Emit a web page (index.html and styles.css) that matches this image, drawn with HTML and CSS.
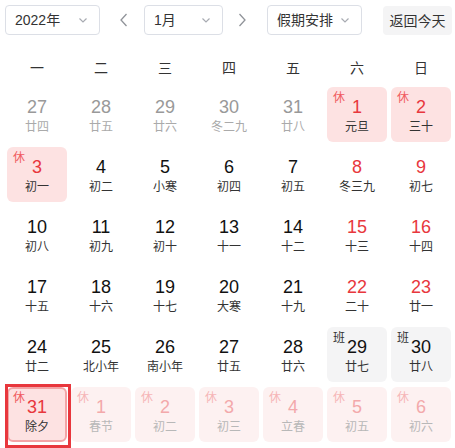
FILE: index.html
```html
<!DOCTYPE html>
<html lang="zh-CN">
<head>
<meta charset="utf-8">
<link rel="stylesheet" href="styles.css">
</head>
<body>
<div class="cal">
  <div class="toolbar">
    <div class="select year"><span>2022年</span><svg class="chev" viewBox="0 0 12 12"><path d="M2.5 4.5 L6 8 L9.5 4.5"/></svg></div>
    <button class="arrow prev"><svg viewBox="0 0 10 16"><path d="M7.5 2 L2 8 L7.5 14"/></svg></button>
    <div class="select month"><span>1月</span><svg class="chev" viewBox="0 0 12 12"><path d="M2.5 4.5 L6 8 L9.5 4.5"/></svg></div>
    <button class="arrow next-btn"><svg viewBox="0 0 10 16"><path d="M2.5 2 L8 8 L2.5 14"/></svg></button>
    <div class="select holiday"><span>假期安排</span><svg class="chev" viewBox="0 0 12 12"><path d="M2.5 4.5 L6 8 L9.5 4.5"/></svg></div>
    <button class="today">返回今天</button>
  </div>
  <div class="week">
    <div>一</div><div>二</div><div>三</div><div>四</div><div>五</div><div>六</div><div>日</div>
  </div>
  <div class="grid">
    <div class="day other"><b>27</b><i>廿四</i></div>
    <div class="day other"><b>28</b><i>廿五</i></div>
    <div class="day other"><b>29</b><i>廿六</i></div>
    <div class="day other"><b>30</b><i>冬二九</i></div>
    <div class="day other"><b>31</b><i>廿八</i></div>
    <div class="day rest"><em>休</em><b>1</b><i>元旦</i></div>
    <div class="day rest"><em>休</em><b>2</b><i>三十</i></div>

    <div class="day rest"><em>休</em><b>3</b><i>初一</i></div>
    <div class="day"><b>4</b><i>初二</i></div>
    <div class="day"><b>5</b><i>小寒</i></div>
    <div class="day"><b>6</b><i>初四</i></div>
    <div class="day"><b>7</b><i>初五</i></div>
    <div class="day weekend"><b>8</b><i>冬三九</i></div>
    <div class="day weekend"><b>9</b><i>初七</i></div>

    <div class="day"><b>10</b><i>初八</i></div>
    <div class="day"><b>11</b><i>初九</i></div>
    <div class="day"><b>12</b><i>初十</i></div>
    <div class="day"><b>13</b><i>十一</i></div>
    <div class="day"><b>14</b><i>十二</i></div>
    <div class="day weekend"><b>15</b><i>十三</i></div>
    <div class="day weekend"><b>16</b><i>十四</i></div>

    <div class="day"><b>17</b><i>十五</i></div>
    <div class="day"><b>18</b><i>十六</i></div>
    <div class="day"><b>19</b><i>十七</i></div>
    <div class="day"><b>20</b><i>大寒</i></div>
    <div class="day"><b>21</b><i>十九</i></div>
    <div class="day weekend"><b>22</b><i>二十</i></div>
    <div class="day weekend"><b>23</b><i>廿一</i></div>

    <div class="day"><b>24</b><i>廿二</i></div>
    <div class="day"><b>25</b><i>北小年</i></div>
    <div class="day"><b>26</b><i>南小年</i></div>
    <div class="day"><b>27</b><i>廿五</i></div>
    <div class="day"><b>28</b><i>廿六</i></div>
    <div class="day work"><em>班</em><b>29</b><i>廿七</i></div>
    <div class="day work"><em>班</em><b>30</b><i>廿八</i></div>

    <div class="day rest selected"><em>休</em><b>31</b><i>除夕</i></div>
    <div class="day rest next"><em>休</em><b>1</b><i>春节</i></div>
    <div class="day rest next"><em>休</em><b>2</b><i>初二</i></div>
    <div class="day rest next"><em>休</em><b>3</b><i>初三</i></div>
    <div class="day rest next"><em>休</em><b>4</b><i>立春</i></div>
    <div class="day rest next"><em>休</em><b>5</b><i>初五</i></div>
    <div class="day rest next"><em>休</em><b>6</b><i>初六</i></div>
  </div>
</div>
</body>
</html>
```
FILE: styles.css
```css
* { box-sizing: border-box; }
html, body { margin: 0; padding: 0; background: #fff; }
body {
  font-family: "Liberation Sans", "Noto Sans CJK SC", sans-serif;
  color: #333;
  width: 455px;
  height: 448px;
  overflow: hidden;
}
.cal { padding: 5px 0 0 7px; }
.toolbar {
  display: flex;
  align-items: center;
  height: 30px;
  margin-left: -2px;
}
.select {
  height: 30px;
  border: 1px solid #dcdfe6;
  border-radius: 4px;
  display: flex;
  align-items: center;
  justify-content: space-between;
  padding: 0 10px 0 9px;
  font-size: 14px;
  color: #333;
  background: #fff;
}
.select span { line-height: 1; }
.chev { width: 12px; height: 12px; fill: none; stroke: #a8abb2; stroke-width: 1.2; }
.year { width: 95px; }
.month { width: 79px; }
.holiday { width: 95px; }
.arrow {
  border: 0;
  background: none;
  padding: 0;
  width: 44px;
  height: 30px;
  display: flex;
  align-items: center;
  justify-content: center;
}
.arrow.prev { padding-left: 4px; }
.arrow.next-btn { padding-right: 6px; }
.arrow svg { width: 10px; height: 16px; fill: none; stroke: #909399; stroke-width: 1.3; }
.today {
  margin-left: 21px;
  height: 29px;
  width: 69px;
  border: 0;
  border-radius: 4px;
  background: #f4f4f5;
  font-family: "Noto Sans CJK SC", sans-serif;
  font-size: 14px;
  color: #333;
  padding: 0;
}
.week {
  display: grid;
  grid-template-columns: repeat(7, 60px);
  column-gap: 4px;
  margin-top: 17px;
  height: 30px;
  align-items: center;
  text-align: center;
  font-family: "Noto Sans CJK SC", sans-serif;
  font-size: 14px;
  color: #333;
}
.grid {
  display: grid;
  grid-template-columns: repeat(7, 60px);
  grid-auto-rows: 55px;
  gap: 5px 4px;
  margin-top: 5px;
}
.day {
  position: relative;
  border-radius: 6px;
  display: flex;
  flex-direction: column;
  align-items: center;
  padding-top: 9px;
}
.day b {
  font-weight: normal;
  font-size: 18px;
  line-height: 22px;
  color: #111;
}
.day i {
  font-style: normal;
  font-family: "Noto Sans CJK SC", sans-serif;
  font-size: 12px;
  line-height: 16px;
  color: #333;
}
.day em {
  position: absolute;
  left: 6px;
  top: 3px;
  font-style: normal;
  font-family: "Noto Sans CJK SC", sans-serif;
  font-size: 12px;
  line-height: 14px;
}
.other b { color: #999; }
.other i { color: #aaa; }
.weekend b { color: #e8373d; }
.rest { background: #fde2e2; }
.rest em { color: #f05a5e; }
.rest b { color: #e8373d; }
.work { background: #f4f4f5; }
.work em { color: #333; }
.next { background: #fdf1f1; }
.next em { color: #f6b5b7; }
.next b { color: #f3a9ab; }
.next i { color: #b8b8b8; }
.selected {
  border: 2px solid #f3a4a6;
  padding-top: 7px;
}
.selected::after {
  content: "";
  position: absolute;
  top: -5px;
  left: -4px;
  right: -6px;
  bottom: -8px;
  border: 3px solid #e8373d;
}
.selected em { left: 4px; top: 1px; }
```
